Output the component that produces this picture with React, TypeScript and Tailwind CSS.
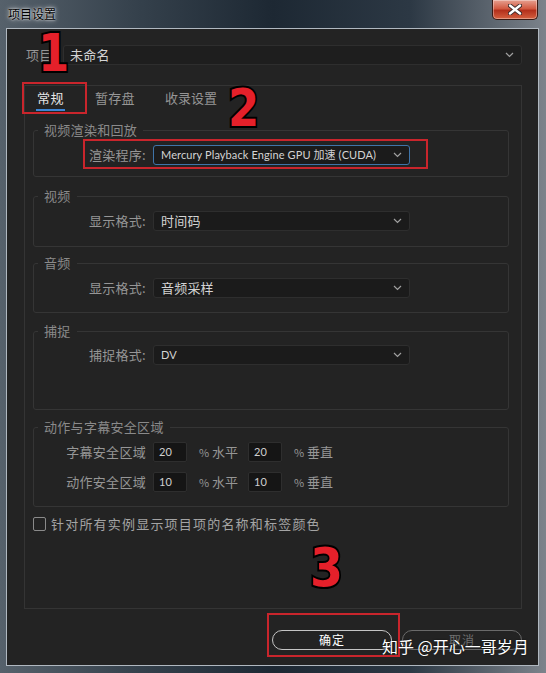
import React from "react";

const Chevron = () => (
  <svg width="9" height="6" viewBox="0 0 9 6">
    <path d="M1 1l3.5 3.5L8 1" stroke="#a0a0a0" strokeWidth="1.2" fill="none" />
  </svg>
);

function Select({ value, width, blue, latin }: { value: string; width: string; blue?: boolean; latin?: boolean }) {
  return (
    <div
      className={`flex items-center justify-between ${width} h-[20px] rounded-[3px] border ${
        blue ? "border-[#3f74a8]" : "border-[#2e2e2e]"
      } bg-[#1b1b1b] pl-[7px] pr-[7px]`}
    >
      <span
        className={`${
          latin ? "font-['Lato','Noto_Sans_CJK_SC',sans-serif] text-[11px] tracking-[0.1px]" : "text-[13px] tracking-[0.2px]"
        } leading-[16px] text-[#d4d4d4] whitespace-nowrap`}
      >
        {value}
      </span>
      <Chevron />
    </div>
  );
}

function Group({ title, height, mt, children }: { title: string; height: string; mt: string; children: React.ReactNode }) {
  return (
    <fieldset className={`${mt} ${height} border border-[#353535] rounded-[3px]`}>
      <legend className="ml-[4px] px-[6px] text-[13px] leading-[16px] tracking-[0.3px] text-[#8a8a8a]">{title}</legend>
      {children}
    </fieldset>
  );
}

function Label({ text }: { text: string }) {
  return <div className="w-[112px] text-right text-[13px] leading-[16px] tracking-[0.3px] text-[#969696] whitespace-nowrap">{text}</div>;
}

function NumInput({ v }: { v: string }) {
  return (
    <div className="w-[34px] h-[20px] rounded-[2px] border border-[#2e2e2e] bg-[#151515] pl-[5px] flex items-center font-['Lato',sans-serif] text-[11px] text-[#d0d0d0]">
      {v}
    </div>
  );
}

function SafeRow({ label, a, b, mt }: { label: string; a: string; b: string; mt: string }) {
  return (
    <div className={`flex items-center ${mt}`}>
      <Label text={label} />
      <div className="ml-[7px]">
        <NumInput v={a} />
      </div>
      <div className="ml-[12px] w-[38px] text-[13px] leading-[16px] text-[#969696] whitespace-nowrap">
        <span className="text-[11px]">%</span> 水平
      </div>
      <div className="ml-[11px]">
        <NumInput v={b} />
      </div>
      <div className="ml-[12px] text-[13px] leading-[16px] text-[#969696] whitespace-nowrap">
        <span className="text-[11px]">%</span> 垂直
      </div>
    </div>
  );
}

const digitCls =
  "absolute font-['DejaVu_Sans',sans-serif] font-bold leading-none text-[#e5202a] [-webkit-text-stroke:4px_#000] [paint-order:stroke_fill] scale-x-[0.88] origin-left";

export default function App() {
  return (
    <div className="relative w-[546px] h-[673px] overflow-hidden bg-[linear-gradient(90deg,#56616b_0%,#35414c_25%,#1d2833_50%,#2c3844_75%,#7c838b_100%)] font-['Noto_Sans_CJK_SC',sans-serif]">
      {/* title bar */}
      <div className="h-[28px] flex items-start justify-between pl-[8px] pr-[8px]">
        <div className="pt-[6px] text-[12px] leading-[16px] text-black [text-shadow:0_0_5px_rgba(255,255,255,0.95),0_0_2px_rgba(255,255,255,0.95)]">
          项目设置
        </div>
        <div className="w-[46px] h-[20px] rounded-b-[5px] border border-t-0 border-[#3a1a14] bg-[linear-gradient(180deg,#e6a090_0%,#d25a42_45%,#b3301c_55%,#d5603f_100%)] shadow-[inset_0_0_0_1px_rgba(255,255,255,0.35)] flex items-center justify-center">
          <svg width="14" height="11" viewBox="0 0 14 11">
            <path d="M2 1.5l10 8M12 1.5l-10 8" stroke="#3a2a2a" strokeWidth="4.2" strokeLinecap="round" />
            <path d="M2 1.5l10 8M12 1.5l-10 8" stroke="#ffffff" strokeWidth="2.4" strokeLinecap="round" />
          </svg>
        </div>
      </div>

      {/* content */}
      <div className="ml-[6px] mr-[7px] h-[638px] bg-[#232323] border border-[#b0b8c0] flex flex-col">
        {/* project row */}
        <div className="mt-[16px] flex items-center">
          <div className="ml-[19px] w-[37px] text-[13px] leading-[16px] tracking-[0.3px] text-[#969696]">项目</div>
          <div className="flex items-center justify-between w-[459px] h-[20px] rounded-[3px] border border-[#2e2e2e] bg-[#1e1e1e] pl-[6px] pr-[7px]">
            <span className="text-[13px] leading-[16px] tracking-[0.2px] text-[#d4d4d4]">未命名</span>
            <Chevron />
          </div>
        </div>

        {/* tab box */}
        <div className="mt-[20px] ml-[17px] mr-[16px] h-[524px] border border-[#343434] flex flex-col">
          <div className="flex gap-[30px] pl-[11px] pt-[4px]">
            <div className="flex flex-col items-center">
              <span className="text-[13px] leading-[16px] tracking-[0.5px] text-[#e6e6e6]">常规</span>
              <div className="mt-[3px] h-[2px] w-[29px] bg-[#3d86d6]" />
            </div>
            <div className="flex flex-col items-center">
              <span className="text-[13px] leading-[16px] tracking-[0.3px] text-[#969696]">暂存盘</span>
              <div className="mt-[3px] h-[2px]" />
            </div>
            <div className="flex flex-col items-center">
              <span className="text-[13px] leading-[16px] tracking-[0px] text-[#969696]">收录设置</span>
              <div className="mt-[3px] h-[2px]" />
            </div>
          </div>

          <div className="ml-[8px] mr-[12px] flex flex-col">
            <Group title="视频渲染和回放" height="h-[55px]" mt="mt-[11px]">
              <div className="flex items-center mt-[7px]">
                <Label text="渲染程序:" />
                <div className="ml-[7px]">
                  <Select value="Mercury Playback Engine GPU 加速 (CUDA)" width="w-[257px]" blue latin />
                </div>
              </div>
            </Group>

            <Group title="视频" height="h-[59px]" mt="mt-[11px]">
              <div className="flex items-center mt-[7px]">
                <Label text="显示格式:" />
                <div className="ml-[7px]">
                  <Select value="时间码" width="w-[257px]" />
                </div>
              </div>
            </Group>

            <Group title="音频" height="h-[58px]" mt="mt-[8px]">
              <div className="flex items-center mt-[7px]">
                <Label text="显示格式:" />
                <div className="ml-[7px]">
                  <Select value="音频采样" width="w-[257px]" />
                </div>
              </div>
            </Group>

            <Group title="捕捉" height="h-[87px]" mt="mt-[10px]">
              <div className="flex items-center mt-[6px]">
                <Label text="捕捉格式:" />
                <div className="ml-[7px]">
                  <Select value="DV" width="w-[257px]" latin />
                </div>
              </div>
            </Group>

            <Group title="动作与字幕安全区域" height="h-[88px]" mt="mt-[9px]">
              <SafeRow label="字幕安全区域" a="20" b="20" mt="mt-[7px]" />
              <SafeRow label="动作安全区域" a="10" b="10" mt="mt-[10px]" />
            </Group>
          </div>

          <div className="mt-[9px] ml-[8px] flex items-center gap-[5px]">
            <div className="w-[13px] h-[14px] border-[1.5px] border-[#8a8a8a] rounded-[2px]" />
            <span className="text-[13px] leading-[16px] tracking-[1.2px] text-[#a4a4a4] whitespace-nowrap">
              针对所有实例显示项目项的名称和标签颜色
            </span>
          </div>
        </div>

        {/* buttons */}
        <div className="mt-[21px] mr-[16px] flex justify-end gap-[10px]">
          <div className="w-[120px] h-[20px] rounded-full border border-[#c4c4c4] flex items-center justify-center text-[12px] leading-[16px] tracking-[1px] text-white">
            确定
          </div>
          <div className="w-[120px] h-[20px] rounded-full border border-[#6a6a6a] flex items-center justify-center text-[12px] leading-[16px] tracking-[1px] text-[#707070]">
            取消
          </div>
        </div>
      </div>

      {/* annotation overlays */}
      <div className="absolute left-[22px] top-[82px] w-[65px] h-[32px] border-2 border-[#c9252c]" />
      <div className="absolute left-[83px] top-[139px] w-[345px] h-[30px] border-2 border-[#c9252c]" />
      <div className="absolute left-[267px] top-[613px] w-[133px] h-[44px] border-2 border-[#c9252c]" />

      <div className={`${digitCls} left-[38px] top-[28px] text-[51px]`}>1</div>
      <div className={`${digitCls} left-[228px] top-[83px] text-[51px]`}>2</div>
      <div className={`${digitCls} left-[310px] top-[541px] text-[54px]`}>3</div>

      <div className="absolute left-[382px] top-[636px] text-[16px] leading-[20px] text-white whitespace-nowrap [text-shadow:0_0_2px_rgba(0,0,0,0.6)]">
        知乎 @开心一哥岁月
      </div>
    </div>
  );
}
